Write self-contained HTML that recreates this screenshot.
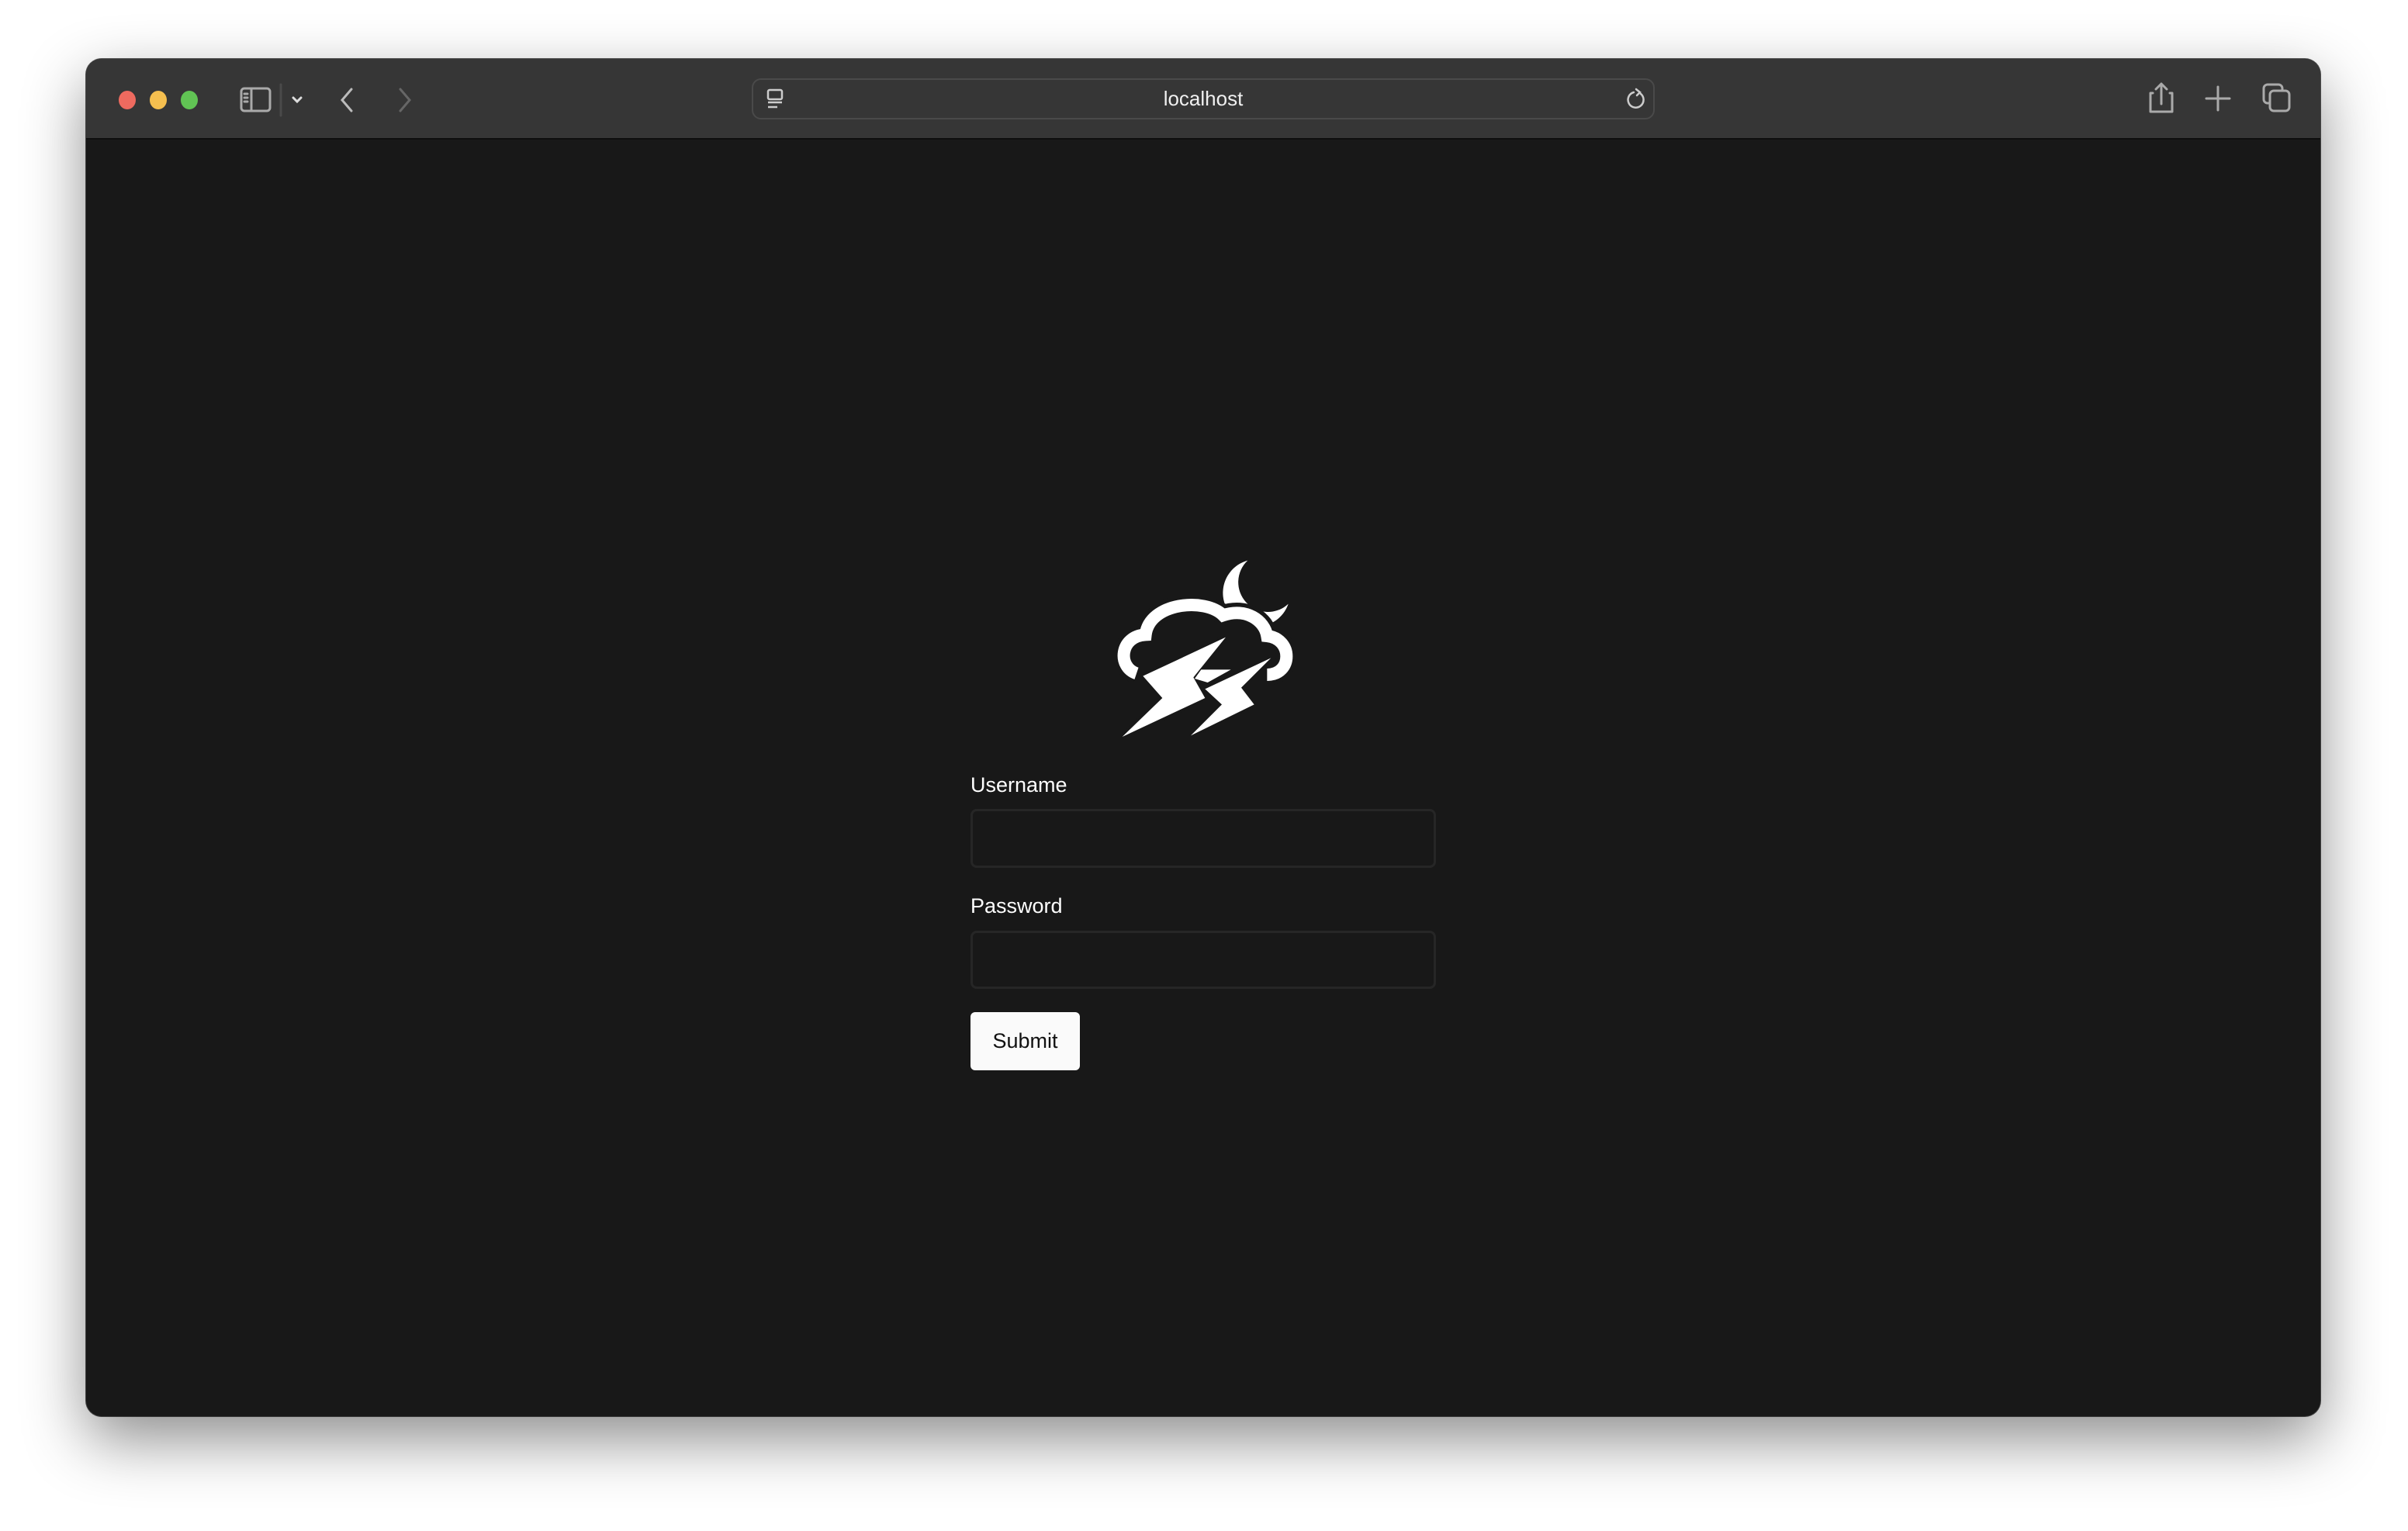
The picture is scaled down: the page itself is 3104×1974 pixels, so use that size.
<!DOCTYPE html>
<html><head><meta charset="utf-8"><style>
html,body{margin:0;padding:0;width:3104px;height:1974px;background:#fff;overflow:hidden;font-family:"Liberation Sans",sans-serif}
.win{position:absolute;left:111px;top:76px;width:2880px;height:1750px;background:#181818;border-radius:20px;overflow:hidden;box-shadow:0 30px 80px rgba(0,0,0,.45),0 0 0 1px #555}
.bar{position:absolute;left:0;top:0;width:100%;height:102px;background:#363636;border-bottom:2px solid #0e0e0e}
.dot{position:absolute;top:41px;width:22px;height:24px;border-radius:50%}
.addr{position:absolute;left:858px;top:25px;width:1164px;height:53px;border:2px solid #4a4a4a;border-radius:12px;box-sizing:border-box;color:#f0f0f0;font-size:26px;text-align:center;line-height:49px}
.lbl{position:absolute;left:1140px;color:#fff;font-size:27px;line-height:32px}
.inp{position:absolute;left:1140px;width:600px;border:3px solid #262626;border-radius:8px;box-sizing:border-box}
.btn{position:absolute;left:1140px;top:1229px;width:141px;height:75px;background:#fafafa;border-radius:6px;color:#111;font-size:27px;text-align:center;line-height:75px}
</style></head><body>
<div class="win">
 <div class="bar">
  <div class="dot" style="left:42px;background:#ee6a5f"></div>
  <div class="dot" style="left:82px;background:#f5bf4f"></div>
  <div class="dot" style="left:122px;background:#61c454"></div>
  <svg style="position:absolute;left:195px;top:30px" width="250" height="46" viewBox="0 0 250 46" fill="none" stroke="#aaa" stroke-width="3" stroke-linecap="round">
   <rect x="5" y="8" width="37" height="29" rx="4"/><line x1="18" y1="8" x2="18" y2="37"/>
   <line x1="9" y1="15" x2="13" y2="15"/><line x1="9" y1="20" x2="13" y2="20"/><line x1="9" y1="25" x2="13" y2="25"/>
   <line x1="56" y1="3" x2="56" y2="43" stroke="#4a4a4a"/>
   <path d="M72 20l5 5 5-5" stroke="#ddd"/>
   <path d="M147 9l-12 14 12 14" stroke="#bbb"/>
   <path d="M210 9l12 14-12 14" stroke="#666"/>
  </svg>
  <div class="addr">localhost</div>
  <svg style="position:absolute;left:873px;top:37px" width="30" height="30" viewBox="0 0 30 30" fill="none" stroke="#ccc" stroke-width="2.5"><rect x="6" y="3" width="18" height="12" rx="2"/><line x1="6" y1="19" x2="24" y2="19"/><line x1="6" y1="25" x2="18" y2="25"/></svg>
  <svg style="position:absolute;left:1984px;top:36px" width="30" height="32" viewBox="0 0 30 32" fill="none" stroke="#ccc" stroke-width="2.5" stroke-linecap="round"><path d="M20 9a10 10 0 1 1-9-2"/><path d="M14 3l5 4-4 4"/></svg>
  <svg style="position:absolute;left:2655px;top:28px" width="220" height="46" viewBox="0 0 220 46" fill="none" stroke="#aaa" stroke-width="3" stroke-linecap="round" stroke-linejoin="round">
   <path d="M9 16h-3v24h28v-24h-3"/><path d="M20 30v-26M13 11l7-7 7 7"/>
   <path d="M93 8v30M78 23h30"/>
   <rect x="152" y="5" width="24" height="24" rx="5"/><rect x="160" y="13" width="25" height="26" rx="5" fill="#363636"/>
  </svg>
 </div>
 <svg style="position:absolute;left:1309px;top:624px" width="280" height="270" viewBox="0 0 840 810">
  <path d="M565 68A130 130 0 1 0 722 236A105 105 0 0 1 565 68Z" fill="#fff"/>
  <path d="M135 505C60 480 70 360 170 355C185 230 400 210 470 280C560 250 630 300 640 360C740 370 740 510 640 510" fill="none" stroke="#181818" stroke-width="80"/>
  <path d="M135 505C60 480 70 360 170 355C185 230 400 210 470 280C560 250 630 300 640 360C740 370 740 510 640 510" fill="none" stroke="#fff" stroke-width="48"/>
  <g fill="#fff" stroke="#181818" stroke-width="22" stroke-linejoin="miter">
   <path d="M160 515L480 365L355 520L400 600L80 750L235 600Z"/>
   <path d="M385 490L500 490L410 540L360 525Z"/>
   <path d="M400 565L655 445L540 560L590 625L345 745L465 625Z"/>
  </g>
  <g fill="#fff">
   <path d="M160 515L480 365L355 520L400 600L80 750L235 600Z"/>
   <path d="M385 490L500 490L410 540L360 525Z"/>
   <path d="M400 565L655 445L540 560L590 625L345 745L465 625Z"/>
  </g>
 </svg>
 <div class="lbl" style="top:920px">Username</div>
 <div class="inp" style="top:967px;height:76px"></div>
 <div class="lbl" style="top:1076px">Password</div>
 <div class="inp" style="top:1124px;height:75px"></div>
 <div class="btn">Submit</div>
</div>
</body></html>
